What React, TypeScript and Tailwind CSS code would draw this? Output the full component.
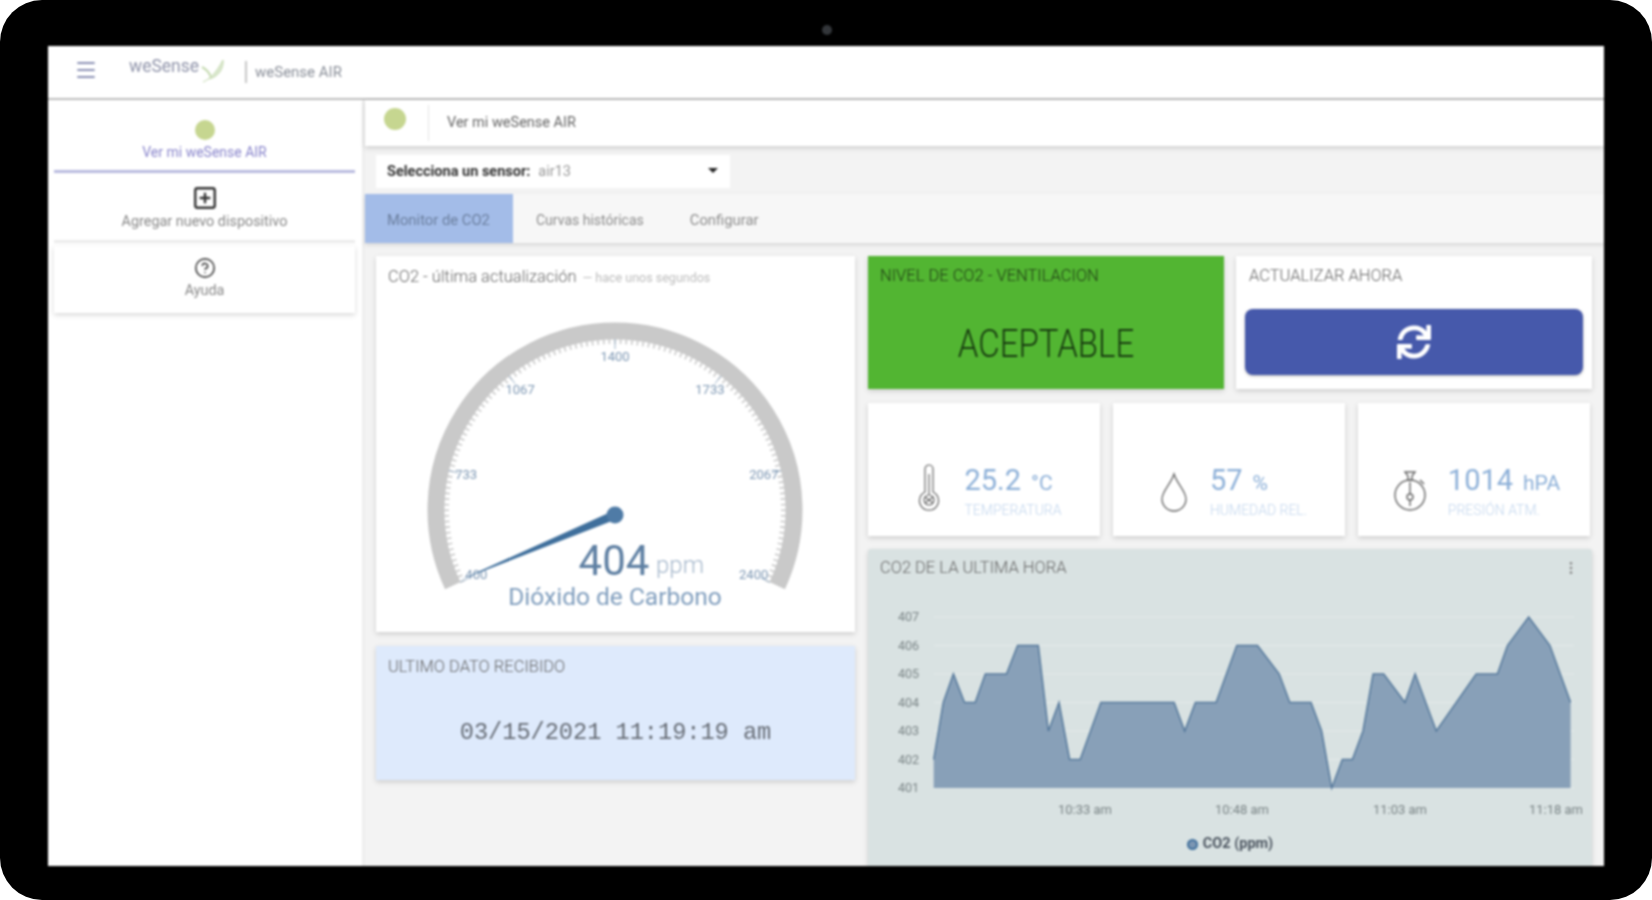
import React from "react";
import { Menu, SquarePlus, CircleHelp, MoreVertical } from "lucide-react";
import { FaSync } from "react-icons/fa";

const cardShadow = "shadow-[0_2px_5px_rgba(0,0,0,0.16)]";

function Gauge() {
  const cx = 239, cy = 228;
  const pt = (a: number, r: number) => {
    const t = (a * Math.PI) / 180;
    return [cx + r * Math.sin(t), cy - r * Math.cos(t)];
  };
  const [sx, sy] = pt(-115, 179);
  const [ex, ey] = pt(115, 179);
  const ticks = Array.from({ length: 121 }, (_, i) => -115 + (i * 230) / 120);
  const labels = ["400", "733", "1067", "1400", "1733", "2067", "2400"];
  return (
    <svg width="479" height="340" className="block [font-family:Roboto,sans-serif]">
      <path d={`M ${sx} ${sy} A 179 179 0 1 1 ${ex} ${ey}`} fill="none" stroke="#c9c9c9" strokeWidth="17" />
      {ticks.map((a, i) => {
        const [x1, y1] = pt(a, 171);
        const [x2, y2] = pt(a, 166);
        return <line key={i} x1={x1} y1={y1} x2={x2} y2={y2} stroke="#c9c9c9" strokeWidth="1.6" />;
      })}
      {labels.map((l, i) => {
        const a = -115 + (i * 230) / 6;
        const [x1, y1] = pt(a, 171);
        const [x2, y2] = pt(a, 161);
        const [tx, ty] = pt(a, 153);
        return (
          <g key={l}>
            <line x1={x1} y1={y1} x2={x2} y2={y2} stroke="#9fb4c9" strokeWidth="1" />
            <text x={tx} y={ty + 4} textAnchor="middle" fontSize="13" fill="#7d97b3">{l}</text>
          </g>
        );
      })}
      <polygon points="84,298 237,229 241,237" fill="#3f6f9c" />
      <circle cx="239" cy="233" r="8.5" fill="#4f7ba6" />
      <text x="238" y="293" textAnchor="middle" fontSize="42" fill="#5f80a3">404</text>
      <text x="304" y="291" textAnchor="middle" fontSize="24" fontWeight="300" fill="#a6b8cc">ppm</text>
      <text x="239" y="323" textAnchor="middle" fontSize="24.5" fill="#7f9dbd">Dióxido de Carbono</text>
    </svg>
  );
}

function Chart() {
  const raw: [number, number][] = [
    [146, 402], [165, 404], [185, 405], [207, 404], [228, 404], [248, 405], [290, 405], [312, 406], [353, 406],
    [373, 403], [394, 404], [415, 402], [436, 402], [477, 404], [622, 404], [643, 403], [664, 404], [705, 404],
    [746, 406], [787, 406], [830, 405], [851, 404], [893, 404], [914, 403], [934, 401], [955, 402], [975, 402],
    [996, 403], [1016, 405], [1037, 405], [1079, 404], [1099, 405], [1141, 403], [1220, 405], [1262, 405],
    [1282, 406], [1324, 407], [1366, 406], [1407, 404],
  ];
  const X = (v: number) => 860 + v / 1.98 - 868;
  const Y = (v: number) => 209 - (v - 401) * 28.5;
  const line = raw.map(([a, b]) => `${X(a).toFixed(1)},${Y(b).toFixed(1)}`).join(" ");
  const area = `${X(146).toFixed(1)},${Y(401)} ${line} ${X(1407).toFixed(1)},${Y(401)}`;
  const xl: [string, number][] = [["10:33 am", 217], ["10:48 am", 374], ["11:03 am", 532], ["11:18 am", 688]];
  return (
    <svg width="724" height="240" className="block [font-family:Roboto,sans-serif]">
      {[401, 402, 403, 404, 405, 406, 407].map((v) => (
        <g key={v}>
          <line x1="66" x2="706" y1={Y(v)} y2={Y(v)} stroke="#e4eaea" strokeWidth="1" />
          <text x="30" y={Y(v) + 4} fontSize="12.5" fill="#7a8486">{v}</text>
        </g>
      ))}
      <polygon points={area} fill="#88a0b8" />
      <polyline points={line} fill="none" stroke="#55789b" strokeWidth="1.5" />
      {xl.map(([t, x]) => (
        <text key={t} x={x} y="235" textAnchor="middle" fontSize="13" fill="#7a8486">{t}</text>
      ))}
    </svg>
  );
}

function Stat({ icon, value, unit, label, layout }: { icon: React.ReactNode; value: string; unit: string; label: string; layout: string }) {
  return (
    <div className={`bg-white h-[133px] flex items-end pb-[17px] justify-center ${cardShadow} ${layout}`}>
      <div className="mb-[7px]">{icon}</div>
      <div className="flex flex-col">
        <div className="flex items-baseline gap-[10px] leading-[32px]">
          <span className="text-[29px] text-[#8db0d8]">{value}</span>
          <span className="text-[21px] text-[#8db0d8]">{unit}</span>
        </div>
        <div className="text-[14px] leading-[18px] mt-[2px] text-[#c2d6ee] font-light">{label}</div>
      </div>
    </div>
  );
}

const ThermoIcon = (
  <svg width="24" height="50" viewBox="0 0 24 50" fill="none" stroke="#666" strokeWidth="1.2">
    <path d="M8 7 a4 4 0 0 1 8 0 V30 a9.5 9.5 0 1 1 -8 0 Z" />
    <circle cx="12" cy="38" r="5" />
    <path d="M12 33 V12" />
    <path d="M8 41 L16 35 M8 35 L16 41" />
  </svg>
);
const DropIcon = (
  <svg width="28" height="40" viewBox="0 0 28 40" fill="none" stroke="#666" strokeWidth="1.3">
    <path d="M14 2 C17 12 26 19 26 27 A12 12 0 0 1 2 27 C2 19 11 12 14 2 Z" />
  </svg>
);
const WatchIcon = (
  <svg width="36" height="42" viewBox="0 0 36 42" fill="none" stroke="#666" strokeWidth="1.4">
    <circle cx="18" cy="25" r="15" />
    <path d="M13 2 H23 L20 6 V10 H16 V6 Z" />
    <path d="M28 10 L32 14" />
    <path d="M18 12 V24" />
    <circle cx="18" cy="27" r="3" />
    <path d="M18 30 V36" />
  </svg>
);

export default function App() {
  return (
    <div className="w-[1652px] h-[900px] bg-white overflow-hidden [font-family:Roboto,sans-serif]">
      <div className="relative w-full h-full bg-black rounded-[42px] pt-[46px] pb-[34px] px-[48px]">
        <div className="absolute left-[822px] top-[25px] w-[10px] h-[10px] rounded-full bg-[#33363a] blur-[1px]" />
        <div className="w-full h-full bg-white flex flex-col overflow-hidden blur-[0.8px]">
          <header className="h-[54px] shrink-0 bg-white border-b-2 border-[#bcbcbc] flex items-center">
            <Menu className="ml-[26px] mb-[4px] text-[#8a90b4]" size={24} strokeWidth={1.8} />
            <div className="ml-[32px] flex items-start relative w-[100px] h-[34px]">
              <span className="text-[#9094aa] text-[17.5px] leading-[22px] -ml-px">weSense</span>
              <svg width="28" height="28" viewBox="0 0 28 28" className="absolute left-[70px] top-[2px]">
                <path d="M3 25 C10 22 16 16 23 3 C24 12 18 20 9 22" fill="#dbe8cf" stroke="#c5dab0" strokeWidth="1" />
                <path d="M2 10 C6 12 9 15 11 20" fill="none" stroke="#c5dab0" strokeWidth="2" />
              </svg>
            </div>
            <div className="ml-[15px] w-[2px] h-[22px] bg-[#c6c6c6]" />
            <span className="ml-[8px] text-[15px] text-[#8a8f99]">weSense AIR</span>
          </header>
          <div className="flex-1 flex min-h-0">
            <aside className="w-[317px] shrink-0 bg-white pl-[6px] pr-[7px] pt-[5px] flex flex-col gap-[3px] border-r-[3px] border-[#eeeeee]">
              <div className="h-[68px] bg-white border-b-[3px] border-[#b9bbdf] flex flex-col items-center justify-center gap-[3px] pt-[5px] shrink-0">
                <div className="w-[20px] h-[20px] rounded-full bg-[#c6d690]" />
                <span className="text-[14px] text-[#8a86cc] leading-[18px]">Ver mi weSense AIR</span>
              </div>
              <div className="h-[67px] bg-white border-b-[3px] border-[#ececec] flex flex-col items-center justify-center gap-[2px] shrink-0">
                <SquarePlus size={26} strokeWidth={2.2} className="text-[#333]" />
                <span className="text-[14.4px] text-[#888] leading-[18px]">Agregar nuevo dispositivo</span>
              </div>
              <div className={`h-[67px] bg-white flex flex-col items-center justify-center gap-[3px] pb-[2px] shrink-0 ${cardShadow}`}>
                <CircleHelp size={22} strokeWidth={1.8} className="text-[#444]" />
                <span className="text-[14.4px] text-[#888] leading-[18px]">Ayuda</span>
              </div>
            </aside>
            <main className="flex-1 min-w-0 bg-[#f3f3f3] flex flex-col">
              <div className={`h-[46px] shrink-0 bg-white flex items-center ${cardShadow}`}>
                <div className="ml-[19px] mb-[8px] w-[22px] h-[22px] rounded-full bg-[#c6d690]" />
                <div className="ml-[22px] w-[1px] h-[36px] bg-[#e4e4e4]" />
                <span className="ml-[18px] text-[14.5px] text-[#666]">Ver mi weSense AIR</span>
              </div>
              <div className="mt-[9px] ml-[11px] w-[354px] h-[33px] shrink-0 bg-white flex items-center pl-[11px] pr-[12px] text-[14.5px]">
                <span className="font-bold text-[#333]">Selecciona un sensor:</span>
                <span className="ml-[8px] text-[#999]">air13</span>
                <div className="ml-auto mb-[3px] w-0 h-0 border-l-[5px] border-r-[5px] border-t-[5px] border-l-transparent border-r-transparent border-t-[#222]" />
              </div>
              <div className="mt-[6px] h-[49px] shrink-0 bg-[#f7f7f7] flex items-center text-[14px] text-[#8c8c8c] shadow-[0_2px_4px_rgba(0,0,0,0.12)]">
                <div className="h-full w-[148px] bg-[#a3bce8] flex items-center pl-[22px] pt-[3px] text-[14.8px] text-[#6b7f9f]">Monitor de CO2</div>
                <div className="pl-[23px] pt-[3px]">Curvas históricas</div>
                <div className="pl-[46px] pt-[3px] text-[14.8px]">Configurar</div>
              </div>
              <div className="flex-1 min-h-0 pt-[13px] pl-[11px] pr-[12px] flex gap-[13px]">
                <div className="w-[479px] shrink-0 flex flex-col gap-[14px]">
                  <div className={`h-[376px] bg-white ${cardShadow}`}>
                    <div className="h-[26px] pl-[12px] pt-[9px] flex items-baseline gap-[6px] leading-[24px]">
                      <span className="text-[16.5px] text-[#666] font-light">CO2 - última actualización</span>
                      <span className="text-[12.5px] text-[#bcbcbc]">— hace unos segundos</span>
                    </div>
                    <Gauge />
                  </div>
                  <div className={`h-[134px] bg-[#deeafc] ${cardShadow} flex flex-col`}>
                    <div className="pl-[12px] pt-[9px] text-[16.5px] leading-[24px] text-[#666] font-light">ULTIMO DATO RECIBIDO</div>
                    <div className="flex-1 flex items-center justify-center pt-[6px] [font-family:'Liberation_Mono',monospace] text-[23.6px] text-[#666c75]">03/15/2021 11:19:19 am</div>
                  </div>
                </div>
                <div className="w-[724px] shrink-0 flex flex-col gap-[14px]">
                  <div className="grid grid-cols-2 gap-[12px] h-[133px] shrink-0">
                    <div className={`bg-[#52b532] ${cardShadow} flex flex-col`}>
                      <div className="pl-[12px] pt-[8px] text-[16.5px] leading-[24px] text-[#1f3a15] font-light">NIVEL DE CO2 - VENTILACION</div>
                      <div className="flex-1 flex items-center justify-center pt-[11px] font-light text-[#173a10]">
                        <span className="inline-block text-[33px] scale-y-[1.18]">ACEPTABLE</span>
                      </div>
                    </div>
                    <div className={`bg-white ${cardShadow} flex flex-col`}>
                      <div className="pl-[13px] pt-[8px] text-[16.5px] leading-[24px] text-[#666] font-light">ACTUALIZAR AHORA</div>
                      <button className="mt-[21px] mx-[9px] h-[66px] rounded-[8px] bg-[#4659ab] flex items-center justify-center shadow-[0_1px_3px_rgba(0,0,0,0.3)]">
                        <FaSync size={34} className="text-white" />
                      </button>
                    </div>
                  </div>
                  <div className="grid grid-cols-3 gap-[13px] h-[133px] shrink-0 pr-[2px]">
                    <Stat layout="gap-[24px] pl-[10px]" icon={ThermoIcon} value="25.2" unit="°C" label="TEMPERATURA" />
                    <Stat layout="gap-[22px] pl-[9px]" icon={DropIcon} value="57" unit="%" label="HUMEDAD REL." />
                    <Stat layout="gap-[20px] pl-[4px]" icon={WatchIcon} value="1014" unit="hPA" label="PRESIÓN ATM." />
                  </div>
                  <div className={`flex-1 min-h-0 -mt-px bg-[#d9e2e2] rounded-t-[3px] overflow-hidden ${cardShadow}`}>
                    <div className="h-[30px] flex items-center pl-[12px] pr-[13px] pt-[8px] text-[16.5px] text-[#666] font-light">
                      <span>CO2 DE LA ULTIMA HORA</span>
                      <MoreVertical size={16} className="ml-auto text-[#888]" />
                    </div>
                    <Chart />
                    <div className="mt-[17px] flex items-center justify-center gap-[5px] text-[14.5px] leading-[16px] font-bold text-[#4c5560]">
                      <span className="w-[11px] h-[11px] rounded-full bg-[#7d97b3] border-2 border-[#3f6f9c]" />
                      CO2 (ppm)
                    </div>
                  </div>
                </div>
              </div>
            </main>
          </div>
        </div>
      </div>
    </div>
  );
}
